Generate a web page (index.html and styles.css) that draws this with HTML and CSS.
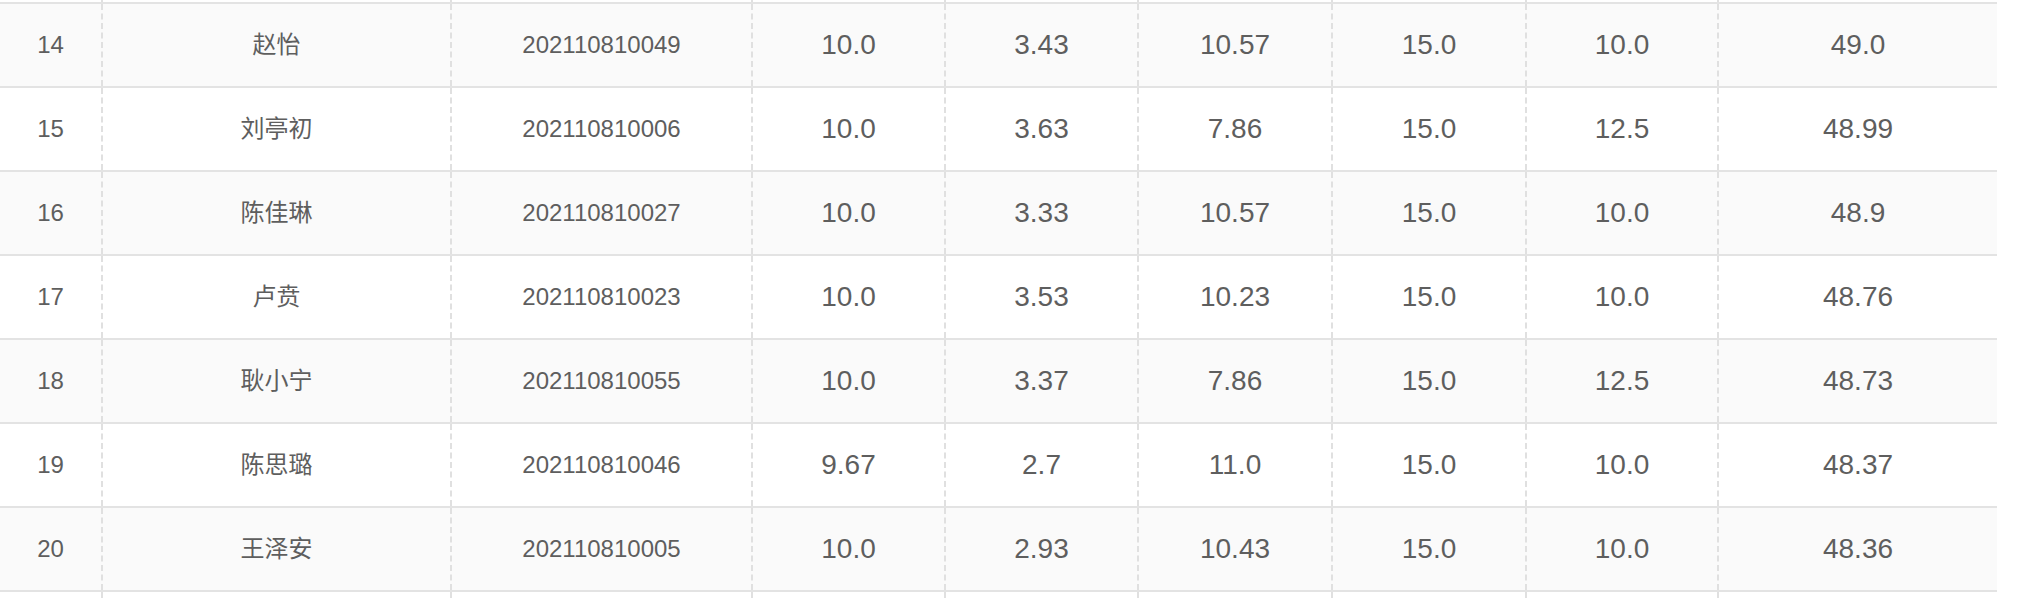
FILE: index.html
```html
<!DOCTYPE html>
<html lang="zh-CN">
<head>
<meta charset="utf-8">
<title>成绩表</title>
<link rel="stylesheet" href="styles.css">
</head>
<body>
<div class="table">
  <div class="row cut-top"><div class="cell"></div><div class="cell"></div><div class="cell"></div><div class="cell"></div><div class="cell"></div><div class="cell"></div><div class="cell"></div><div class="cell"></div><div class="cell"></div></div>
  <div class="row stripe"><div class="cell sm">14</div><div class="cell sm">赵怡</div><div class="cell sm">202110810049</div><div class="cell">10.0</div><div class="cell">3.43</div><div class="cell">10.57</div><div class="cell">15.0</div><div class="cell">10.0</div><div class="cell">49.0</div></div>
  <div class="row"><div class="cell sm">15</div><div class="cell sm">刘亭初</div><div class="cell sm">202110810006</div><div class="cell">10.0</div><div class="cell">3.63</div><div class="cell">7.86</div><div class="cell">15.0</div><div class="cell">12.5</div><div class="cell">48.99</div></div>
  <div class="row stripe"><div class="cell sm">16</div><div class="cell sm">陈佳琳</div><div class="cell sm">202110810027</div><div class="cell">10.0</div><div class="cell">3.33</div><div class="cell">10.57</div><div class="cell">15.0</div><div class="cell">10.0</div><div class="cell">48.9</div></div>
  <div class="row"><div class="cell sm">17</div><div class="cell sm">卢贲</div><div class="cell sm">202110810023</div><div class="cell">10.0</div><div class="cell">3.53</div><div class="cell">10.23</div><div class="cell">15.0</div><div class="cell">10.0</div><div class="cell">48.76</div></div>
  <div class="row stripe"><div class="cell sm">18</div><div class="cell sm">耿小宁</div><div class="cell sm">202110810055</div><div class="cell">10.0</div><div class="cell">3.37</div><div class="cell">7.86</div><div class="cell">15.0</div><div class="cell">12.5</div><div class="cell">48.73</div></div>
  <div class="row"><div class="cell sm">19</div><div class="cell sm">陈思璐</div><div class="cell sm">202110810046</div><div class="cell">9.67</div><div class="cell">2.7</div><div class="cell">11.0</div><div class="cell">15.0</div><div class="cell">10.0</div><div class="cell">48.37</div></div>
  <div class="row stripe"><div class="cell sm">20</div><div class="cell sm">王泽安</div><div class="cell sm">202110810005</div><div class="cell">10.0</div><div class="cell">2.93</div><div class="cell">10.43</div><div class="cell">15.0</div><div class="cell">10.0</div><div class="cell">48.36</div></div>
  <div class="row cut-bottom"><div class="cell"></div><div class="cell"></div><div class="cell"></div><div class="cell"></div><div class="cell"></div><div class="cell"></div><div class="cell"></div><div class="cell"></div><div class="cell"></div></div>
</div>
</body>
</html>
```

FILE: styles.css
```css
html, body {
  margin: 0;
  padding: 0;
  background: #ffffff;
  overflow: hidden;
}

.table {
  width: 1997px;
  font-family: "Liberation Sans", "Noto Sans CJK SC", sans-serif;
  color: #5e5e5e;
}

.row {
  display: grid;
  grid-template-columns: 101px 349px 301px 193px 193px 194px 194px 192px 280px;
  height: 84px;
  box-sizing: border-box;
  border-bottom: 2px solid #e3e3e3;
  background: #ffffff;
}

.row.stripe {
  background: #fafafa;
}

.row.cut-top {
  height: 4px;
}

.row.cut-bottom {
  height: 12px;
  border-bottom: none;
}

.cell {
  display: flex;
  align-items: center;
  justify-content: center;
  font-size: 28px;
  line-height: 1;
  box-sizing: border-box;
}

.cell + .cell {
  border-left: 2px dashed #e0e0e0;
}

.cell.sm {
  font-size: 24px;
}
```
